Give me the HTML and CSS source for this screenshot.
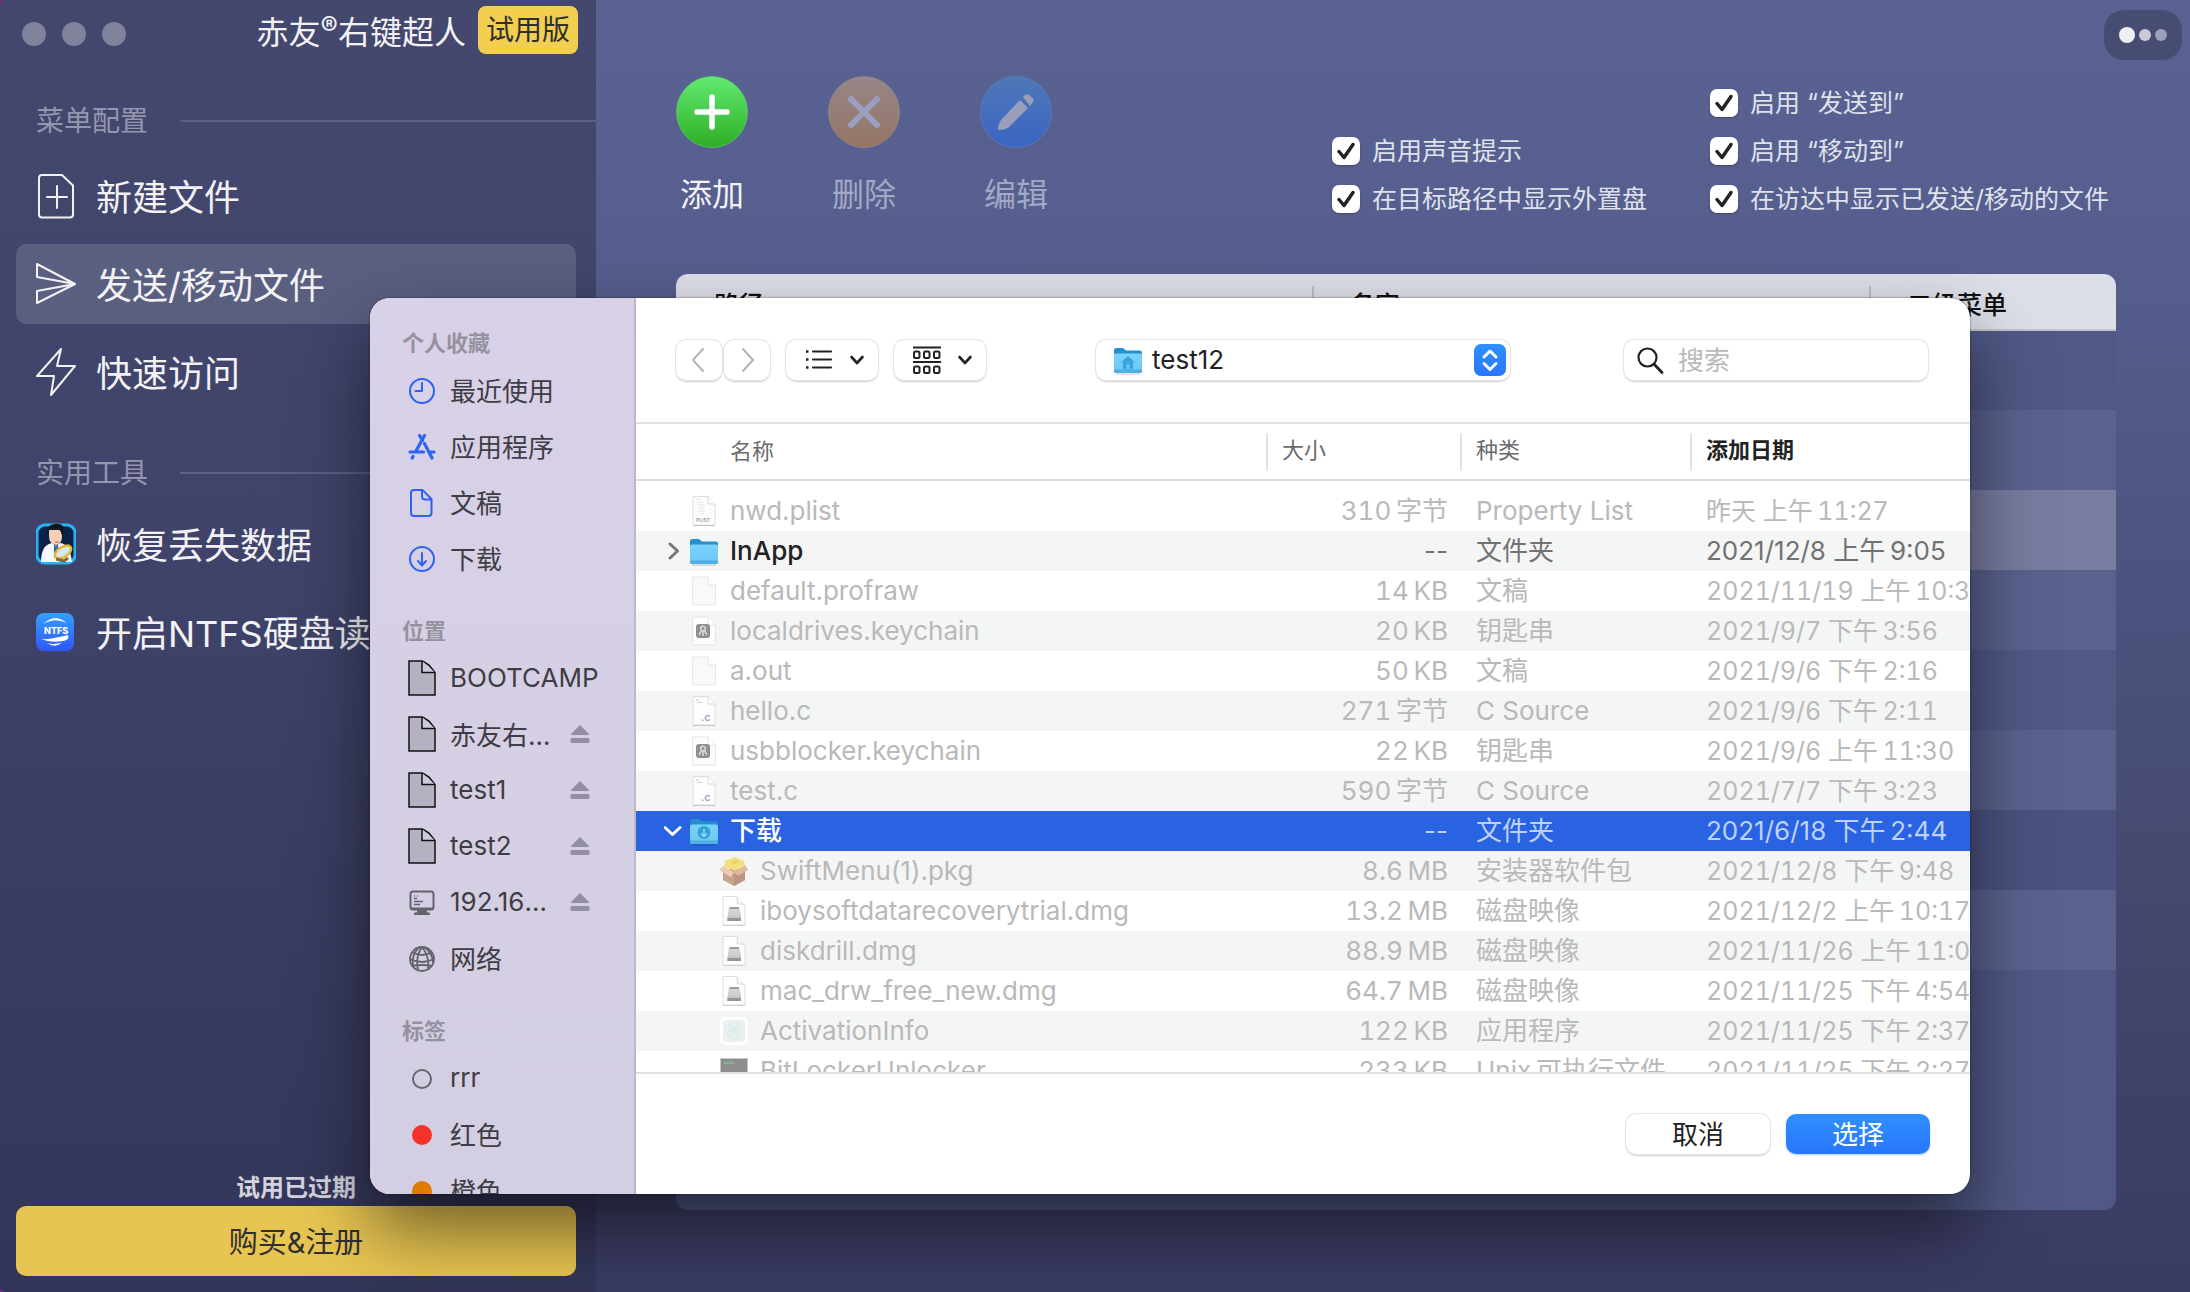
FILE: index.html
```html
<!DOCTYPE html>
<html lang="zh-CN">
<head>
<meta charset="utf-8">
<title>赤友右键超人</title>
<link rel="stylesheet" href="styles.css">
</head>
<body>
<svg class="sprite" aria-hidden="true">
  <defs>
    <linearGradient id="g-folder" x1="0" y1="0" x2="0" y2="1"><stop offset="0" stop-color="#7bd3fd"/><stop offset=".75" stop-color="#6fcaf8"/><stop offset="1" stop-color="#4fb4e6"/></linearGradient>
    <linearGradient id="g-drive" x1="0" y1="0" x2="0" y2="1"><stop offset="0" stop-color="#d9d9dc"/><stop offset=".7" stop-color="#c9c9cd"/><stop offset="1" stop-color="#8f8f94"/></linearGradient>
    <linearGradient id="g-ntfs" x1="0" y1="0" x2="0" y2="1"><stop offset="0" stop-color="#35a0fd"/><stop offset="1" stop-color="#2f56fb"/></linearGradient>
  </defs>
  <symbol id="i-volume" viewBox="0 0 28 36"><path d="M1 1h13.500l6.500 4 6 7.500V35H1z" fill="#b5b0c2" stroke="#111" stroke-width="1.500"/><path d="M14 1v11.500h13" fill="#cfcadb" stroke="#111" stroke-width="1.500"/></symbol>
  <symbol id="i-eject" viewBox="0 0 20 20"><path d="M10 1.500 19 10.500H1z" fill="#938ea1" stroke="#938ea1" stroke-linejoin="round"/><rect x=".5" y="14" width="19" height="5" rx="1.500" fill="#938ea1"/></symbol>
  <symbol id="i-folder" viewBox="0 0 32 32"><path d="M2 6.500Q2 4 4.500 4H10q1.500 0 2.500 1.200L14 6.500h14q2 0 2 2V12H2z" fill="#2490cf"/><path d="M2 11q0-1.500 1.500-1.500h25Q30 9.500 30 11v16q0 2-2 2H4q-2 0-2-2z" fill="url(#g-folder)"/><path d="M2 25.500h28V27q0 2-2 2H4q-2 0-2-2z" fill="#4cb0e2"/><path d="M4 30h24" stroke="#000" stroke-opacity=".22"/></symbol>
  <symbol id="i-blank" viewBox="0 0 32 32"><path d="M4.500 2h15.500l7.500 8v20h-23z" fill="#f8f9fa" stroke="#e6e8ea"/><path d="M20 2v8h7.500" fill="#fff" stroke="#e2e4e6"/></symbol>
  <symbol id="i-c" viewBox="0 0 32 32"><path d="M5 1.500h15l7 7.500v21H5z" fill="#fdfdfe" stroke="#dcdee0"/><path d="M5 30.500h22" stroke="#c3c5c8"/><path d="M20 1.500V9h7" fill="#fff" stroke="#d5d7da"/><path d="M8 5h3M9 7.500h5" stroke="#ccc"/></symbol>
  <symbol id="i-plist" viewBox="0 0 32 32"><path d="M5 1.500h15l7 7.500v21H5z" fill="#fdfdfe" stroke="#dcdee0"/><path d="M5 30.500h22" stroke="#c3c5c8"/><path d="M20 1.500V9h7" fill="#fff" stroke="#d5d7da"/><path d="M8 4h5M9 7h6M9 10h8M11 13h5M10 16h7M12 19h4" stroke="#e2e2e2"/></symbol>
  <symbol id="i-key" viewBox="0 0 32 32"><path d="M4.500 2h15.500l7.500 8v20h-23z" fill="#fcfcfd" stroke="#e3e5e7"/><path d="M20 2v8h7.500" fill="#fff" stroke="#e2e4e6"/><rect x="8" y="9" width="14" height="14" rx="3" fill="#8f8f8f"/><circle cx="15" cy="13.500" r="2.300" fill="none" stroke="#d8d8d8" stroke-width="1.500"/><path d="M13.500 15.500 11 20M15 16v5M16.500 15.500 19 20" stroke="#d8d8d8" stroke-width="1.600"/></symbol>
  <symbol id="i-pkg" viewBox="0 0 32 32"><path d="M5 14v11l11 6 11-6V14z" fill="#c5a48d"/><path d="M16 19v12l11-6V14z" fill="#b8957c"/><path d="m5 11 11 6-3 5L1 15z" fill="#efc9b2"/><path d="m27 10-11 7 4 4 10-6z" fill="#e0b79b"/><path d="M7 6 17 2l9 4 1 4-10 6-11-5z" fill="#f3df7c"/><path d="M12 6.500 18 5l3 2-5 2z" fill="#e8cf63"/></symbol>
  <symbol id="i-dmg" viewBox="0 0 32 32"><path d="M5 1.500h13l9 8.500v20H5z" fill="#fff" stroke="#dcdee0"/><path d="M5 30.500h22" stroke="#cfd1d3"/><path d="M18.500 1.500q1.500 1 .7 7.500 6-.5 7.800 1" fill="#fafafa" stroke="#d5d7da"/><path d="M11 12.500h10.500l1.500 9v4.500H9.500v-4.500z" fill="url(#g-drive)"/><path d="M11.500 13h9.500" stroke="#888" stroke-width="1.500"/><path d="M9.500 23h13.500V26H9.500z" fill="#97979b"/></symbol>
  <symbol id="i-app" viewBox="0 0 32 32"><rect x="2" y="2" width="28" height="28" rx="6" fill="#fff"/><rect x="5" y="5" width="22" height="22" rx="3" fill="#ecf2f2"/><circle cx="16" cy="16" r="8" fill="none" stroke="#dce9e8"/><circle cx="16" cy="16" r="4" fill="#deeceb"/><path d="M5 11h22M5 21h22M11 5v22M21 5v22" stroke="#e0eae9" stroke-width=".7"/></symbol>
  <symbol id="i-term" viewBox="0 0 32 32"><rect x="2.500" y="3" width="27" height="27" fill="#8d8d8d"/><path d="M3 3.500h26" stroke="#c4c8cc"/><path d="M6 8h11" stroke="#7cc48b" stroke-width="2.500" stroke-dasharray="2 .8"/></symbol>
  <symbol id="i-down" viewBox="0 0 16 10"><path d="m2.500 2 5.500 6 5.500-6" fill="none" stroke="currentColor" stroke-width="2.600" stroke-linecap="round" stroke-linejoin="round"/></symbol>
</svg>

<div class="app">
  <aside class="sidebar">
    <header class="titlebar">
      <div class="lights"><i></i><i></i><i></i></div>
      <h1>赤友<sup>®</sup>右键超人</h1>
      <span class="trial">试用版</span>
    </header>

    <h2 class="group">菜单配置</h2>
    <nav>
      <a href="#new"><svg viewBox="0 0 40 48"><path d="M6 3h20L37 13.500V42.500q0 3-3 3H6q-3 0-3-3V6q0-3 3-3z"/><path d="M11 25h20M21 14v22"/></svg>新建文件</a>
      <a href="#send" class="current"><svg viewBox="0 0 40 48"><path d="M1 4v13l38 7L1 31v12l38-19z"/></svg>发送/移动文件</a>
      <a href="#quick"><svg viewBox="0 0 40 48"><path d="M25 1 1 28h17l-3 19 24-29H21z"/></svg>快速访问</a>
    </nav>

    <h2 class="group">实用工具</h2>
    <nav>
      <a href="#recover"><svg class="pic" viewBox="0 0 40 48"><rect x="1" y="5" width="38" height="38" rx="8" fill="#0a2148" stroke="#28b4f4" stroke-width="3"/><path d="M5 42q0-17 11-19l4 3 4-3q10 1 12 19z" fill="#f6f9fd"/><path d="m18 24 2 3 2-3 1 14h-5z" fill="#2a63c4"/><path d="M13 10h13v6q0 8-6 9-7-1-7-9z" fill="#f6d0b4"/><path d="M12 16q-2-8 3-11 8-3 12 1 1 4-1 10-1-5-3-7-5 1-9 0-2 2-2 7z" fill="#14161c"/><path d="M19 22h4" stroke="#e04a3c"/><ellipse cx="27" cy="32" rx="9" ry="5" transform="rotate(-32 27 32)" fill="#cfeafa" stroke="#f0b429" stroke-width="2.500"/><path d="m20 39 8 2 4-3" stroke="#80664c" stroke-width="3" fill="none"/></svg>恢复丢失数据</a>
      <a href="#ntfs"><svg class="pic" viewBox="0 0 40 48"><rect x="0" y="5" width="38" height="38" rx="8" fill="url(#g-ntfs)"/><path d="M7 16q12-11 24-1-12-6-24 1z" fill="#fff"/><path d="M5 31q8 1 27-4 2 5-5 6-13 2-22-2z" fill="#fff"/><path d="M11 35q7 2 15-.5-7 6-15 .5z" fill="#fff"/><text x="8" y="26" font-family="Inter, sans-serif" font-size="9" font-weight="800" fill="#fff">NTFS</text></svg>开启NTFS硬盘读写</a>
    </nav>

    <footer class="buy">
      <p>试用已过期</p>
      <button type="button">购买&amp;注册</button>
    </footer>
  </aside>

  <main class="main">
    <button type="button" class="more" aria-label="更多"><i></i><i></i><i></i></button>
    <div class="tools">
      <div class="actions">
        <button type="button"><svg viewBox="0 0 72 72"><defs><linearGradient id="ga" x1="0" y1="0" x2="0" y2="1"><stop offset="0" stop-color="#62ea72"/><stop offset="1" stop-color="#2fae25"/></linearGradient></defs><circle cx="36" cy="36" r="35.500" fill="url(#ga)" stroke="#5fdc69" stroke-opacity=".6"/><path d="M36 21v30M21 36h30" stroke="#fff" stroke-width="5.500" stroke-linecap="round"/></svg>添加</button>
        <button type="button" disabled><svg viewBox="0 0 72 72"><defs><linearGradient id="gb" x1="0" y1="0" x2="0" y2="1"><stop offset="0" stop-color="#978689"/><stop offset="1" stop-color="#947564"/></linearGradient></defs><circle cx="36" cy="36" r="35.500" fill="url(#gb)" stroke="#a3908c" stroke-opacity=".6"/><path d="m23 23 26 26M49 23 23 49" stroke="#999fc0" stroke-width="6" stroke-linecap="round"/></svg>删除</button>
        <button type="button" disabled><svg viewBox="0 0 72 72"><defs><linearGradient id="gc" x1="0" y1="0" x2="0" y2="1"><stop offset="0" stop-color="#4f77b9"/><stop offset="1" stop-color="#3a65c1"/></linearGradient></defs><circle cx="36" cy="36" r="35.500" fill="url(#gc)" stroke="#5a86c9" stroke-opacity=".6"/><path d="m40 24 8 8-19 19q-3 3-11 3 0-6 3-10zM43 21q3-4 6-2 6 4 4 7l-3 4z" fill="#999fbb"/></svg>编辑</button>
      </div>
      <div class="options">
        <div>
          <label><input type="checkbox" checked>启用声音提示</label>
          <label><input type="checkbox" checked>在目标路径中显示外置盘</label>
        </div>
        <div>
          <label><input type="checkbox" checked>启用 “发送到”</label>
          <label><input type="checkbox" checked>启用 “移动到”</label>
          <label><input type="checkbox" checked>在访达中显示已发送/移动的文件</label>
        </div>
      </div>
    </div>

    <div class="paths">
      <table>
        <colgroup><col><col class="c-title"><col class="c-level"></colgroup>
        <thead><tr><th>路径</th><th>名字</th><th>二级菜单</th></tr></thead>
        <tbody>
          <tr><td></td><td></td><td></td></tr>
          <tr><td></td><td></td><td></td></tr>
          <tr class="picked"><td></td><td></td><td></td></tr>
          <tr><td></td><td></td><td></td></tr>
          <tr><td></td><td></td><td></td></tr>
          <tr><td></td><td></td><td></td></tr>
          <tr><td></td><td></td><td></td></tr>
          <tr><td></td><td></td><td></td></tr>
        </tbody>
      </table>
    </div>
  </main>

  <section class="sheet" role="dialog" aria-label="选择文件夹">
    <aside class="places">
      <h3>个人收藏</h3>
      <a href="#recents"><svg viewBox="0 0 28 28"><g fill="none" stroke="#2f62f2" stroke-width="2"><circle cx="14" cy="14" r="12"/><path d="M14 6v8H7.500" stroke-linejoin="round" stroke-linecap="round"/></g></svg><span>最近使用</span></a>
      <a href="#apps"><svg viewBox="0 0 28 28"><g fill="none" stroke="#2f62f2" stroke-width="3.200" stroke-linecap="round"><path d="M16.500 2.500 8 18M11.500 2.500l3 5M16.500 10.500 24 25M2 19h13.500M21.500 19H26M5 23.500 4.200 25"/></g></svg><span>应用程序</span></a>
      <a href="#documents"><svg viewBox="0 0 28 28"><g fill="none" stroke="#2f62f2" stroke-width="2" stroke-linejoin="round"><path d="M6 1h8.500l9 9v14q0 3-3 3H6q-3 0-3-3V4q0-3 3-3z"/><path d="M14 1v6.500q0 3 3 3h6.500"/></g></svg><span>文稿</span></a>
      <a href="#downloads"><svg viewBox="0 0 28 28"><g fill="none" stroke="#2f62f2" stroke-width="2" stroke-linecap="round" stroke-linejoin="round"><circle cx="14" cy="14" r="12"/><path d="M14 8v12M10 16l4 4.500 4-4.500"/></g></svg><span>下载</span></a>
      <h3>位置</h3>
      <a href="#bootcamp"><svg class="vol"><use href="#i-volume"/></svg><span>BOOTCAMP</span></a>
      <div class="place"><a href="#v1"><svg class="vol"><use href="#i-volume"/></svg><span>赤友右键超人</span></a><button type="button" aria-label="推出"><svg><use href="#i-eject"/></svg></button></div>
      <div class="place"><a href="#v2"><svg class="vol"><use href="#i-volume"/></svg><span>test1</span></a><button type="button" aria-label="推出"><svg><use href="#i-eject"/></svg></button></div>
      <div class="place"><a href="#v3"><svg class="vol"><use href="#i-volume"/></svg><span>test2</span></a><button type="button" aria-label="推出"><svg><use href="#i-eject"/></svg></button></div>
      <div class="place"><a href="#v4"><svg viewBox="0 0 28 28"><rect x="2.500" y="2.500" width="23" height="18" rx="2.500" fill="none" stroke="#65626c" stroke-width="2"/><path d="M3 19h22v1.500H3zM10 21h8l1 3h2.500v1.500h-15V24H9z" fill="#65626c" stroke="#65626c"/><path d="M6 7h1M9 7h1M6 9.500h3M6 12.500h9M6 15.500h6" stroke="#65626c" stroke-width="1.300"/></svg><span>192.168.1.1</span></a><button type="button" aria-label="推出"><svg><use href="#i-eject"/></svg></button></div>
      <a href="#network"><svg viewBox="0 0 28 28"><g fill="none" stroke="#65626c" stroke-width="1.800"><circle cx="14" cy="14" r="12"/><path d="M14 2q-7 10-4 24M14 2q8 10 6 23M12 2Q3 8 5 22M16 2q9 6 9 16M4 7q10 6 20 0M2 14q12 6 24 0M4 21q10-2 20 0"/></g></svg><span>网络</span></a>
      <h3>标签</h3>
      <a href="#t1"><i class="dot ring"></i><span>rrr</span></a>
      <a href="#t2"><i class="dot red"></i><span>红色</span></a>
      <a href="#t3"><i class="dot orange"></i><span>橙色</span></a>
    </aside>

    <div class="browser">
      <div class="toolbar">
        <div class="pair">
          <button type="button" class="ctl nav" aria-label="后退"><svg viewBox="0 0 16 24"><path d="M12 1 2 12l10 11"/></svg></button>
          <button type="button" class="ctl nav" aria-label="前进"><svg viewBox="0 0 16 24"><path d="m4 1 10 11L4 23"/></svg></button>
        </div>
        <button type="button" class="ctl view" aria-label="列表视图"><svg class="glyph" viewBox="0 0 28 28"><path d="M8 5.500h18M8 13.500h18M8 21.500h18" stroke="#222" stroke-width="2.200" stroke-linecap="round"/><path d="M1 5.500h2.500M1 13.500h2.500M1 21.500h2.500" stroke="#222" stroke-width="2.600"/></svg><svg class="caret"><use href="#i-down"/></svg></button>
        <button type="button" class="ctl view" aria-label="分组方式"><svg class="glyph" viewBox="0 0 28 28"><g fill="none" stroke="#222" stroke-width="2"><path d="M0 1.500h28M0 16h28"/><rect x="1" y="5.500" width="5.500" height="6.500" rx="1.500"/><rect x="11" y="5.500" width="5.500" height="6.500" rx="1.500"/><rect x="21" y="5.500" width="5.500" height="6.500" rx="1.500"/><rect x="1" y="20.500" width="5.500" height="6.500" rx="1.500"/><rect x="11" y="20.500" width="5.500" height="6.500" rx="1.500"/><rect x="21" y="20.500" width="5.500" height="6.500" rx="1.500"/></g></svg><svg class="caret"><use href="#i-down"/></svg></button>
        <div class="ctl popup">
          <svg class="home" viewBox="0 0 32 32"><use href="#i-folder"/><path d="m16 12 7 6.500h-2V25h-3.500v-4.500h-3V25H11v-6.500H9z" fill="#39a5dc"/></svg>
          <select aria-label="位置"><option>test12</option></select>
          <svg class="steppers" viewBox="0 0 32 32"><defs><linearGradient id="gs" x1="0" y1="0" x2="0" y2="1"><stop offset="0" stop-color="#2f90ff"/><stop offset="1" stop-color="#2976fd"/></linearGradient></defs><rect width="32" height="32" rx="7" fill="url(#gs)"/><path d="m10 13 6-6 6 6M10 19.500l6 6 6-6" fill="none" stroke="#fff" stroke-width="3" stroke-linecap="round" stroke-linejoin="round"/></svg>
        </div>
        <div class="ctl search">
          <svg viewBox="0 0 28 28"><circle cx="11.500" cy="11.500" r="9" fill="none" stroke="#222" stroke-width="2.200"/><path d="m18 18 8 8.500" stroke="#222" stroke-width="2.800" stroke-linecap="round"/></svg>
          <input type="search" placeholder="搜索" aria-label="搜索">
        </div>
      </div>

      <div class="list">
        <table>
          <colgroup><col><col class="c-size"><col class="c-kind"><col class="c-date"></colgroup>
          <thead><tr><th>名称</th><th><span>大小</span></th><th><span>种类</span></th><th class="sorted"><span>添加日期</span></th></tr></thead>
          <tbody>
            <tr><td><div><svg class="file" viewBox="0 0 32 32"><use href="#i-plist"/><text class="tag plist" x="8" y="27">PLIST</text></svg>nwd.plist</div></td><td>310&thinsp;字节</td><td>Property List</td><td>昨天 上午&thinsp;11:27</td></tr>
            <tr class="on"><td><div><button type="button" class="tri" aria-label="展开"><svg viewBox="0 0 20 20"><path d="m6 3 7.500 7L6 17"/></svg></button><svg class="file"><use href="#i-folder"/></svg>InApp</div></td><td>--</td><td>文件夹</td><td>2021/12/8 上午&thinsp;9:05</td></tr>
            <tr><td><div><svg class="file"><use href="#i-blank"/></svg>default.profraw</div></td><td>14&thinsp;KB</td><td>文稿</td><td>2021/11/19 上午&thinsp;10:35</td></tr>
            <tr><td><div><svg class="file"><use href="#i-key"/></svg>localdrives.keychain</div></td><td>20&thinsp;KB</td><td>钥匙串</td><td>2021/9/7 下午&thinsp;3:56</td></tr>
            <tr><td><div><svg class="file"><use href="#i-blank"/></svg>a.out</div></td><td>50&thinsp;KB</td><td>文稿</td><td>2021/9/6 下午&thinsp;2:16</td></tr>
            <tr><td><div><svg class="file" viewBox="0 0 32 32"><use href="#i-c"/><text class="tag" x="13" y="26">.c</text></svg>hello.c</div></td><td>271&thinsp;字节</td><td>C Source</td><td>2021/9/6 下午&thinsp;2:11</td></tr>
            <tr><td><div><svg class="file"><use href="#i-key"/></svg>usbblocker.keychain</div></td><td>22&thinsp;KB</td><td>钥匙串</td><td>2021/9/6 上午&thinsp;11:30</td></tr>
            <tr><td><div><svg class="file" viewBox="0 0 32 32"><use href="#i-c"/><text class="tag" x="13" y="26">.c</text></svg>test.c</div></td><td>590&thinsp;字节</td><td>C Source</td><td>2021/7/7 下午&thinsp;3:23</td></tr>
            <tr class="on selected"><td><div><button type="button" class="tri" aria-label="折叠"><svg viewBox="0 0 20 20"><path d="m1 6.500 7.500 7 7.500-7"/></svg></button><svg class="file" viewBox="0 0 32 32"><use href="#i-folder"/><circle cx="16" cy="17.500" r="6.500" fill="#35a0d8"/><path d="M16 14v7M13 18.500l3 3 3-3" fill="none" stroke="#8fdcff" stroke-width="1.500"/></svg>下载</div></td><td>--</td><td>文件夹</td><td>2021/6/18 下午&thinsp;2:44</td></tr>
            <tr><td><div class="in"><svg class="file"><use href="#i-pkg"/></svg>SwiftMenu(1).pkg</div></td><td>8.6&thinsp;MB</td><td>安装器软件包</td><td>2021/12/8 下午&thinsp;9:48</td></tr>
            <tr><td><div class="in"><svg class="file"><use href="#i-dmg"/></svg>iboysoftdatarecoverytrial.dmg</div></td><td>13.2&thinsp;MB</td><td>磁盘映像</td><td>2021/12/2 上午&thinsp;10:17</td></tr>
            <tr><td><div class="in"><svg class="file"><use href="#i-dmg"/></svg>diskdrill.dmg</div></td><td>88.9&thinsp;MB</td><td>磁盘映像</td><td>2021/11/26 上午&thinsp;11:05</td></tr>
            <tr><td><div class="in"><svg class="file"><use href="#i-dmg"/></svg>mac_drw_free_new.dmg</div></td><td>64.7&thinsp;MB</td><td>磁盘映像</td><td>2021/11/25 下午&thinsp;4:54</td></tr>
            <tr><td><div class="in"><svg class="file"><use href="#i-app"/></svg>ActivationInfo</div></td><td>122&thinsp;KB</td><td>应用程序</td><td>2021/11/25 下午&thinsp;2:37</td></tr>
            <tr><td><div class="in"><svg class="file"><use href="#i-term"/></svg>BitLockerUnlocker</div></td><td>233&thinsp;KB</td><td>Unix&thinsp;可执行文件</td><td>2021/11/25 下午&thinsp;2:27</td></tr>
          </tbody>
        </table>
      </div>

      <footer class="confirm">
        <button type="button" class="ctl">取消</button>
        <button type="button" class="ctl primary">选择</button>
      </footer>
    </div>
  </section>
</div>
</body>
</html>
```

FILE: styles.css
```css
* { box-sizing: border-box; }

body {
  margin: 0;
  background: #7a2a86;
  color: #f2f2f5;
  font-family: Inter, "Noto Sans CJK SC", sans-serif;
  font-size: 26px;
}

button, input, select { font: inherit; color: inherit; }
button { margin: 0; padding: 0; border: 0; background: none; }
a { color: inherit; text-decoration: none; }
h1, h2, h3, p { margin: 0; }
svg { display: block; flex: none; }
.sprite { position: absolute; width: 0; height: 0; }

.app {
  position: relative;
  display: grid;
  grid-template-columns: 596px 1fr;
  height: 100vh;
  overflow: hidden;
  border-radius: 5px 0 0 5px;
}

/* Left sidebar */
.sidebar {
  display: flex;
  flex-direction: column;
  background: linear-gradient(#44486f, #3f4369 45%, #333558);
}

.titlebar {
  display: flex;
  align-items: center;
  height: 60px;
  padding: 0 18px 0 22px;
}
.lights { display: flex; gap: 16px; margin: 8px auto 0 0; }
.lights i { width: 24px; height: 24px; border-radius: 50%; background: #80839b; }
.titlebar h1 { margin-top: 6px; font-size: 32px; font-weight: 400; line-height: 48px; }
.titlebar sup { font-size: 26px; font-weight: 500; line-height: 1; vertical-align: 9px; }
.trial {
  height: 48px;
  margin-left: 12px;
  padding: 0 8px;
  border-radius: 8px;
  background: #f2cf4f;
  color: #2f2f2f;
  font-size: 28px;
  line-height: 48px;
}

.group {
  display: flex;
  align-items: center;
  gap: 32px;
  height: 40px;
  margin-top: 39px;
  padding-left: 36px;
  color: #9496ae;
  font-size: 28px;
  font-weight: 400;
}
.group::after { content: ""; flex: 1; height: 2px; margin-top: 4px; background: #5c6084; }

.sidebar nav { display: grid; gap: 8px; padding: 17px 20px 0 16px; }
.sidebar nav a {
  display: flex;
  align-items: center;
  gap: 20px;
  height: 80px;
  padding: 0 0 2px 20px;
  border-radius: 10px;
  font-size: 36px;
  white-space: nowrap;
}
.sidebar nav a.current { background: #5a5f80; }
.sidebar nav svg { width: 40px; height: 48px; margin-top: 2px; }
.sidebar nav svg:not(.pic) { fill: none; stroke: #f2f2f5; stroke-width: 2; stroke-linejoin: round; stroke-linecap: round; }
.sidebar nav + .group { margin-top: 39px; }
.sidebar nav + .group + nav { padding-top: 13px; }

.buy { margin-top: auto; padding: 0 20px 16px 16px; text-align: center; }
.buy p { font-size: 24px; font-weight: 600; line-height: 36px; color: #d2d3de; }
.buy button {
  width: 100%;
  height: 70px;
  padding-bottom: 2px;
  border-radius: 10px;
  background: #e8c552;
  color: #303030;
  font-size: 29px;
}

/* Main panel */
.main {
  display: flex;
  flex-direction: column;
  padding: 0 74px 82px 80px;
  background: linear-gradient(#5a6293, #565e8e 20%, #4e5582 40%, #45496f 68%, #3e4167 86%, #3a3b63);
}
.more {
  position: absolute;
  top: 10px;
  right: 8px;
  display: flex;
  align-items: center;
  justify-content: center;
  gap: 4px;
  width: 78px;
  height: 50px;
  border-radius: 20px;
  background: #474c73;
}
.more i { width: 12px; height: 12px; border-radius: 50%; background: #9da0b9; }
.more i:nth-child(1) { width: 16px; height: 16px; background: #f0f0f4; }
.more i:nth-child(2) { background: #c9cad6; }

.tools { display: flex; justify-content: space-between; height: 274px; padding-top: 76px; }
.actions { display: flex; gap: 80px; }
.actions button {
  display: flex;
  flex-direction: column;
  align-items: center;
  gap: 23px;
  height: 144px;
  width: 72px;
  font-size: 32px;
  line-height: 48px;
  white-space: nowrap;
}
.actions button:disabled { color: #a3a8c6; }
.actions svg { width: 72px; height: 72px; }

.options { display: flex; align-items: flex-end; gap: 63px; height: 141px; }
.options > div { display: grid; gap: 12px; }
.options label {
  display: flex;
  align-items: center;
  gap: 12px;
  font-size: 25px;
  line-height: 36px;
  color: #dfe1ec;
  white-space: nowrap;
}
.options > div:last-child { width: 406px; }
.options input {
  appearance: none;
  width: 28px;
  height: 28px;
  margin: 0;
  border-radius: 7px;
  background: #fff url("data:image/svg+xml,%3Csvg xmlns='http://www.w3.org/2000/svg' viewBox='0 0 28 28'%3E%3Cpath d='m7 14.500 5 6L21 7.500' fill='none' stroke='%23222' stroke-width='3.500' stroke-linecap='round' stroke-linejoin='round'/%3E%3C/svg%3E");
  box-shadow: 0 1px 2px #0004;
}

.paths { flex: 1; min-height: 0; border-radius: 12px; overflow: hidden; background: #505885; }
.paths table { width: 100%; border-collapse: collapse; table-layout: fixed; }
.c-title { width: 557px; }
.c-level { width: 247px; }
.paths thead { background: #dcdee8; }
.paths th {
  position: relative;
  height: 56px;
  padding: 3px 0 0 38px;
  border-bottom: 2px solid #c3c4ca;
  color: #111;
  font-size: 25px;
  font-weight: 500;
  text-align: left;
}
.paths th + th::before { content: ""; position: absolute; left: 0; top: 12px; bottom: 8px; width: 2px; background: #bcbdc5; }
.paths td { height: 80px; padding: 0; }
.paths tbody tr:nth-child(even) { background: #5a618d; }
.paths tbody tr.picked { background: #787da0; }
.paths tbody tr:nth-child(7) { background: #4b527f; }

/* Open-folder sheet */
.sheet {
  position: absolute;
  inset: 298px 220px 98px 370px;
  display: grid;
  grid-template-columns: 266px 1fr;
  overflow: hidden;
  border-radius: 20px;
  background: #fff;
  color: #222;
  box-shadow: 0 0 2px #0009, 0 36px 72px #0008;
}
.places { overflow: hidden; min-height: 0; background: linear-gradient(#d8d1e7, #d4cee2); border-right: 2px solid #bdb9c4; color: #3f3d44; }
.places h3 {
  height: 64px;
  padding: 26px 0 0 32px;
  font-size: 22px;
  font-weight: 700;
  line-height: 38px;
  color: #96919f;
}
.places a { display: flex; align-items: center; gap: 14px; height: 56px; padding: 0 0 1px 38px; white-space: nowrap; }
.places a > svg { width: 28px; height: 28px; margin-top: 2px; }
.places a > svg.vol { height: 36px; margin-top: 0; }
.place { display: flex; align-items: center; }
.place a { flex: none; width: 186px; }
.place span { overflow: hidden; text-overflow: ellipsis; }
.place button { margin-left: 14px; }
.place button svg { width: 20px; height: 20px; }
.dot { flex: none; width: 20px; height: 20px; margin: 2px 4px 0; border-radius: 50%; }
.ring { border: 2px solid #68656f; }
.red { background: #f4312b; }
.orange { background: #df7c00; }

.browser { display: flex; flex-direction: column; min-width: 0; min-height: 0; }

.ctl {
  display: flex;
  align-items: center;
  height: 40px;
  border-radius: 10px;
  background: #fff;
  box-shadow: 0 0 0 1px #e4e4e4, 0 2px 2px #0003;
}
.toolbar { display: flex; align-items: center; height: 124px; padding: 0 42px 0 40px; }
.pair { display: flex; gap: 2px; }
.nav { justify-content: center; width: 46px; }
.nav svg { width: 16px; height: 24px; fill: none; stroke: #b4b4b4; stroke-width: 2; stroke-linecap: round; stroke-linejoin: round; }
.view { justify-content: space-between; width: 92px; margin-left: 16px; padding: 0 13px 0 19px; }
.glyph { width: 28px; height: 28px; }
.caret { width: 16px; height: 10px; color: #222; }
.popup { position: relative; width: 414px; margin-left: 110px; }
.home { position: absolute; left: 16px; width: 32px; height: 32px; pointer-events: none; }
.popup select { appearance: none; width: 100%; height: 40px; padding: 0 40px 2px 56px; border: 0; background: none; }
.steppers { position: absolute; right: 4px; width: 32px; height: 32px; pointer-events: none; }
.search { gap: 14px; width: 304px; margin-left: auto; padding: 0 13px 0 12px; }
.search svg { width: 28px; height: 28px; }
.search input { flex: 1; min-width: 0; padding: 0; border: 0; background: none; outline: 0; }
.search input::placeholder { color: #b9b9b9; }

.list { flex: 1; min-height: 0; overflow: hidden; border: solid #e2e2e2; border-width: 2px 0; }
.list table { width: 100%; border-collapse: collapse; table-layout: fixed; }
.c-size { width: 194px; }
.c-kind { width: 230px; }
.c-date { width: 280px; }
.list th {
  height: 56px;
  padding: 0 0 6px 94px;
  border-bottom: 2px solid #dcdcdc;
  color: #6b6b6b;
  font-size: 22px;
  font-weight: 400;
  text-align: left;
}
.list th + th { padding: 0; }
.list th span { display: block; padding: 0 0 4px 14px; border-left: 2px solid #e2e2e2; line-height: 34px; }
.list th.sorted { color: #222; font-weight: 700; }
.list tbody::before { content: ""; display: block; height: 10px; }
.list td { height: 40px; padding: 0 0 0 16px; line-height: 40px; color: #b9b9b9; white-space: nowrap; overflow: hidden; }
.list td:first-child { padding-left: 52px; }
.list td:nth-child(2) { padding: 0 12px 0 0; text-align: right; }
.list td:nth-child(even) { font-variant-numeric: tabular-nums; }
.list td:last-child { font-size: 25px; }
.list tr.on td { font-variant-numeric: normal; font-size: 26px; }
.list tr:nth-child(even) td { background: #f4f5f5; }
.list td > div { position: relative; display: flex; align-items: center; gap: 10px; }
.list td > div.in { padding-left: 30px; }
.file { width: 32px; height: 32px; }
.tag { fill: #9c97c4; font-size: 11px; font-weight: 500; }
.tag.plist { fill: #a5a5a5; font-size: 5px; font-weight: 700; }
.tri { position: absolute; left: -24px; }
.tri svg { width: 20px; height: 20px; fill: none; stroke: #777; stroke-width: 3; stroke-linecap: round; stroke-linejoin: round; }
.list tr.on td { color: #727272; }
.list tr.on td:first-child { color: #222; font-weight: 500; }
.list tr.selected td { background: #2a63e1; color: #bcd2fb; }
.list tr.selected td:first-child { color: #fff; }
.selected .tri svg { stroke: #fff; }

.confirm { display: flex; justify-content: flex-end; gap: 16px; height: 120px; padding: 40px 40px 0 0; }
.confirm .ctl { justify-content: center; width: 144px; padding-bottom: 4px; }
.confirm .primary { background: linear-gradient(#2f90ff, #2976fd); color: #fff; box-shadow: 0 1px 2px #2976fd66; }
```
